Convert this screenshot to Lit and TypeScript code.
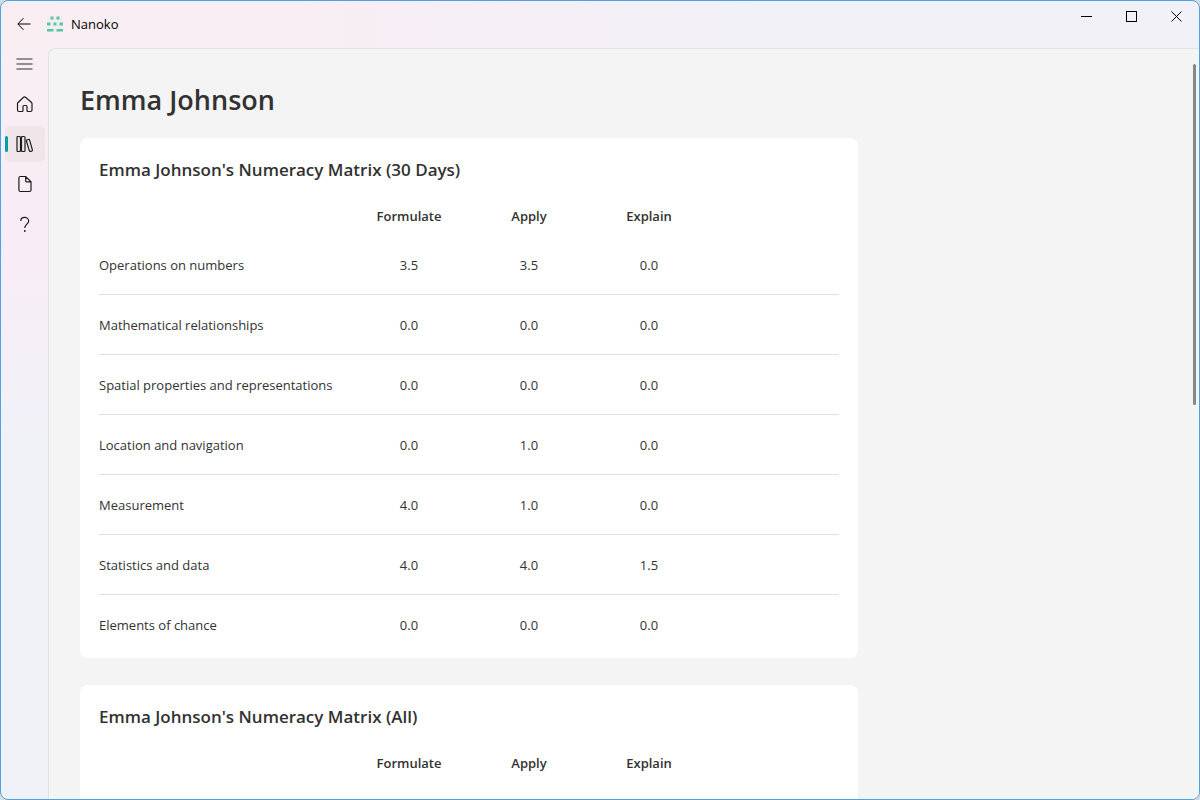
import { LitElement, html, css, svg, nothing } from "lit";
import { customElement, property } from "lit/decorators.js";

interface MatrixRow {
  label: string;
  scores: number[];
}

const COLUMNS = ["Formulate", "Apply", "Explain"];

const ROWS: MatrixRow[] = [
  { label: "Operations on numbers", scores: [3.5, 3.5, 0] },
  { label: "Mathematical relationships", scores: [0, 0, 0] },
  { label: "Spatial properties and representations", scores: [0, 0, 0] },
  { label: "Location and navigation", scores: [0, 1, 0] },
  { label: "Measurement", scores: [4, 1, 0] },
  { label: "Statistics and data", scores: [4, 4, 1.5] },
  { label: "Elements of chance", scores: [0, 0, 0] },
];

const NAV = [
  {
    label: "Home",
    icon: svg`<path d="M3.800 8.300 L9 3.300 a1.500 1.500 0 0 1 2 0 L16.800 8.300 a2 2 0 0 1 .7 1.500 V16 a1.500 1.500 0 0 1 -1.500 1.500 H13.500 a1 1 0 0 1 -1 -1 V12.500 a1 1 0 0 0 -1 -1 H9.500 a1 1 0 0 0 -1 1 V16.500 a1 1 0 0 1 -1 1 H4.500 a1.500 1.500 0 0 1 -1.500 -1.500 V9.800 a2 2 0 0 1 .8 -1.500 Z"/>`,
  },
  {
    label: "Library",
    icon: svg`<rect x="2.500" y="2.500" width="3.500" height="15" rx="1"/><rect x="7" y="2.500" width="3.500" height="15" rx="1"/><path d="M12.600 5.800 l1.300 -.3 a1 1 0 0 1 1.200 .7 l2.800 9.700 a1 1 0 0 1 -.7 1.200 l-1.200 .3 a1 1 0 0 1 -1.200 -.7 L11.900 7 a1 1 0 0 1 .7 -1.200 Z"/>`,
  },
  {
    label: "Documents",
    icon: svg`<path d="M5.900 2.500 H11.200 L16.500 7.800 V16 a1.500 1.500 0 0 1 -1.500 1.500 H5.900 a1.500 1.500 0 0 1 -1.500 -1.500 V4 a1.500 1.500 0 0 1 1.500 -1.500 Z M11.200 2.500 V6.800 a1 1 0 0 0 1 1 H16.500"/>`,
  },
  {
    label: "Help",
    icon: svg`<path d="M6.200 7 A3.900 3.900 0 0 1 10.200 3.400 A3.900 3.900 0 0 1 14.200 7.100 C14.200 10.200 10.300 10.200 10.300 14"/><circle class="dot" cx="10.300" cy="17" r=".9"/>`,
  },
];

@customElement("score-matrix")
class ScoreMatrix extends LitElement {
  @property() heading = "";
  @property({ attribute: false }) rows: MatrixRow[] = [];

  static styles = css`
    :host {
      display: block;
      box-sizing: border-box;
      min-height: 520px;
      padding: 0 19px 3px;
      background: #fff;
      border-radius: 8px;
    }
    .heading {
      margin: 0;
      padding: 20px 0 16px;
      font-size: 17px;
      line-height: 24px;
      font-weight: 600;
    }
    .matrix {
      width: 100%;
      border-collapse: separate;
      border-spacing: 0;
      table-layout: fixed;
    }
    .label-col {
      width: 250px;
    }
    .score-col {
      width: 120px;
    }
    .head {
      height: 37px;
      padding: 0;
      font-weight: 600;
      vertical-align: top;
      line-height: 36px;
    }
    .label,
    .score,
    .filler {
      height: 59px;
      padding: 0;
      border-bottom: 1px solid #e0e0e0;
      font-weight: 400;
    }
    .label {
      text-align: left;
      white-space: nowrap;
    }
    .score {
      text-align: center;
    }
    .row:last-child > * {
      border-bottom-color: transparent;
    }
  `;

  render() {
    return html`
      <h2 class="heading" id="heading">${this.heading}</h2>
      <table class="matrix" aria-labelledby="heading">
        <colgroup>
          <col class="label-col" />
          ${COLUMNS.map(() => html`<col class="score-col" />`)}
          <col />
        </colgroup>
        <thead>
          <tr>
            <td class="head"></td>
            ${COLUMNS.map((c) => html`<th class="head" scope="col">${c}</th>`)}
            <td class="head"></td>
          </tr>
        </thead>
        <tbody>
          ${this.rows.map(
            (r) => html`<tr class="row">
              <th class="label" scope="row">${r.label}</th>
              ${r.scores.map((s) => html`<td class="score">${s.toFixed(1)}</td>`)}
              <td class="filler"></td>
            </tr>`,
          )}
        </tbody>
      </table>
    `;
  }
}

@customElement("app-root")
class AppRoot extends LitElement {
  static styles = css`
    :host {
      display: block;
      height: 100vh;
      background: #dcdcdc;
      color: #323232;
      font-family: "Open Sans", "Noto Sans", sans-serif;
      font-size: 13px;
      line-height: 20px;
    }
    .window {
      box-sizing: border-box;
      height: 100%;
      display: grid;
      grid-template: 47px minmax(0, 1fr) / 47px minmax(0, 1fr);
      overflow: hidden;
      border: 1px solid #4ba3e3;
      border-radius: 8px;
      background:
        linear-gradient(90deg, #f9eef2, #f8eef4 25%, #f2f1f8 65%) top / 100% 48px no-repeat,
        linear-gradient(180deg, #f9eef2, #f8edf7 32%, #f1f1f8 55%);
    }
    .titlebar {
      grid-column: 1 / -1;
      display: flex;
      align-items: flex-start;
      color: #000;
    }
    button {
      font: inherit;
      color: inherit;
      border: 0;
      padding: 0;
      background: none;
      display: flex;
      align-items: center;
      justify-content: center;
    }
    svg {
      display: block;
      fill: none;
      stroke: currentColor;
    }
    .back {
      width: 46px;
      height: 46px;
    }
    .brand {
      display: flex;
      align-items: center;
      gap: 8px;
      height: 46px;
    }
    .logo {
      fill: #5ac4a5;
      stroke: none;
      background: #f2eef0;
    }
    .controls {
      display: flex;
      margin-left: auto;
    }
    .control {
      width: 45px;
      height: 30px;
    }
    .nav {
      display: flex;
      flex-direction: column;
      gap: 4px;
      padding: 0 4px;
      margin-top: -2px;
    }
    .item {
      position: relative;
      width: 40px;
      height: 36px;
      flex: none;
      border-radius: 5px;
      color: #1b1b1b;
    }
    .menu {
      color: #707070;
    }
    .active {
      background: #f0e6ea;
    }
    .active::before {
      content: "";
      position: absolute;
      left: 0;
      top: 10px;
      width: 3px;
      height: 16px;
      border-radius: 2px;
      background: #009faa;
    }
    .dot {
      fill: currentColor;
      stroke: none;
    }
    .content {
      position: relative;
      min-height: 0;
      border-top: 1px solid #e5e2e7;
      border-left: 1px solid #e5e2e7;
      border-top-left-radius: 8px;
      background: #f4f4f4;
      overflow: hidden;
    }
    .scroller {
      box-sizing: border-box;
      height: 100%;
      overflow-y: auto;
      scrollbar-width: none;
      padding: 31px;
    }
    .title {
      margin: 0 0 18px;
      font-size: 27px;
      line-height: 40px;
      font-weight: 600;
    }
    .cards {
      display: flex;
      flex-direction: column;
      gap: 27px;
      max-width: 778px;
    }
    .thumb {
      position: absolute;
      top: 15px;
      right: 3px;
      width: 3px;
      height: 341px;
      border-radius: 2px;
      background: #868686;
    }
  `;

  render() {
    return html`
      <div class="window">
        <header class="titlebar">
          <button class="back" aria-label="Back">
            <svg width="14" height="14" viewBox="0 0 14 14"><path d="M13.500 7 H1 M6.500 1.200 L.8 7 L6.500 12.800" /></svg>
          </button>
          <div class="brand">
            <svg class="logo" width="16" height="16" viewBox="0 0 16 16">
              <path d="M3.500 .5h3v3h-3z M9.500 .5h3v3h-3z M0 6.500h3.500v3H0z M6.500 6.500h3v3h-3z M12.500 6.500h3.500v3h-3.500z M0 13h6.500v2.500H0z M9.500 13h6.500v2.500H9.500z" />
            </svg>
            <span>Nanoko</span>
          </div>
          <div class="controls">
            <button class="control" aria-label="Minimize">
              <svg width="11" height="11" viewBox="0 0 11 11"><path d="M0 5.500h11" /></svg>
            </button>
            <button class="control" aria-label="Maximize">
              <svg width="11" height="11" viewBox="0 0 11 11"><rect x=".5" y=".5" width="10" height="10" /></svg>
            </button>
            <button class="control" aria-label="Close">
              <svg width="11" height="11" viewBox="0 0 11 11"><path d="M.5 .5l10 10M10.500 .5l-10 10" /></svg>
            </button>
          </div>
        </header>
        <nav class="nav" aria-label="Main">
          <button class="item menu" aria-label="Menu">
            <svg width="18" height="14" viewBox="0 0 18 14"><path stroke-width="1.500" d="M.5 2h16M.5 7h16M.5 12h16" /></svg>
          </button>
          ${NAV.map(
            (n, i) => html`<button
              class="item ${i === 1 ? "active" : ""}"
              aria-label=${n.label}
              aria-current=${i === 1 ? "page" : nothing}
            >
              <svg width="20" height="20" viewBox="0.500 0 20 20" stroke-width="1.200">${n.icon}</svg>
            </button>`,
          )}
        </nav>
        <main class="content">
          <div class="scroller">
            <h1 class="title">Emma Johnson</h1>
            <div class="cards">
              <score-matrix .heading=${"Emma Johnson's Numeracy Matrix (30 Days)"} .rows=${ROWS}></score-matrix>
              <score-matrix .heading=${"Emma Johnson's Numeracy Matrix (All)"}></score-matrix>
            </div>
          </div>
          <div class="thumb"></div>
        </main>
      </div>
    `;
  }
}
